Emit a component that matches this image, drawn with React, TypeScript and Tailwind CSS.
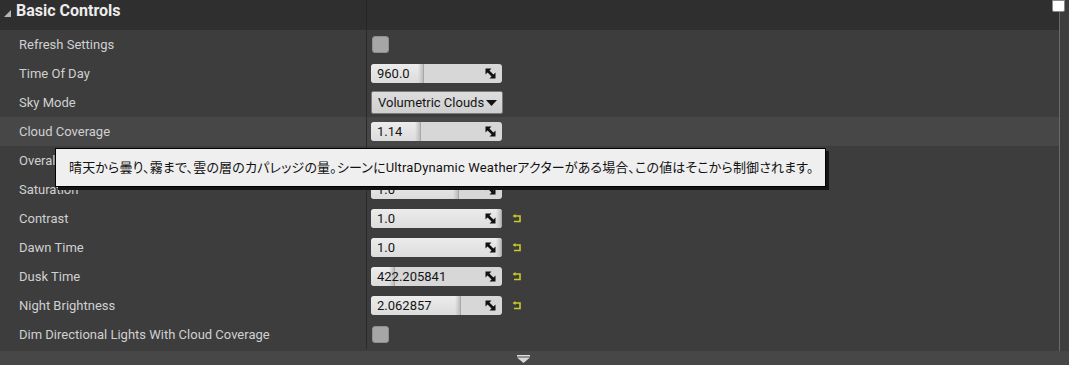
import React from 'react'

type Row =
  | { label: string; kind: 'check' }
  | { label: string; kind: 'spin'; value: string; fill: number; reset?: boolean }
  | { label: string; kind: 'combo'; value: string }

const rows: Row[] = [
  { label: 'Refresh Settings', kind: 'check' },
  { label: 'Time Of Day', kind: 'spin', value: '960.0', fill: 53 },
  { label: 'Sky Mode', kind: 'combo', value: 'Volumetric Clouds' },
  { label: 'Cloud Coverage', kind: 'spin', value: '1.14', fill: 50 },
  { label: 'Overall Intensity', kind: 'spin', value: '1.0', fill: 88, reset: true },
  { label: 'Saturation', kind: 'spin', value: '1.0', fill: 88 },
  { label: 'Contrast', kind: 'spin', value: '1.0', fill: 131, reset: true },
  { label: 'Dawn Time', kind: 'spin', value: '1.0', fill: 131, reset: true },
  { label: 'Dusk Time', kind: 'spin', value: '422.205841', fill: 24, reset: true },
  { label: 'Night Brightness', kind: 'spin', value: '2.062857', fill: 90, reset: true },
  { label: 'Dim Directional Lights With Cloud Coverage', kind: 'check' },
]

function SpinArrows() {
  return (
    <svg width="11" height="11" viewBox="0 0 11 11" className="shrink-0">
      <path d="M0.5 0.5 H6.5 L0.5 6.5 Z" fill="#111" />
      <path d="M10.5 10.5 H4.5 L10.5 4.5 Z" fill="#111" />
      <path d="M2 2 L9 9" stroke="#111" strokeWidth="2.6" />
    </svg>
  )
}

function ResetArrow() {
  return (
    <svg width="10" height="9" viewBox="0 0 10 9" className="shrink-0">
      <path d="M3 2 H8 V7.5 H2" stroke="#c9cc2a" strokeWidth="1.6" fill="none" />
      <path d="M0.5 2 L3.5 0 V4 Z" fill="#c9cc2a" />
    </svg>
  )
}

function Checkbox() {
  return <div className="w-[17px] h-[17px] rounded-[3px] bg-[#a6a6a6] border border-[#8f8f8f]" />
}

function Spin({ value, fill }: { value: string; fill: number }) {
  return (
    <div className="relative w-[131px] h-[19px] rounded-[3px] bg-[#d7d7d7] overflow-hidden">
      <div
        className="absolute left-0 top-0 bottom-0 bg-gradient-to-b from-[#ececec] to-[#dcdcdc] border-r border-[#a8a8a8] rounded-l-[3px]"
        style={{ width: fill }}
      >
        <div className="absolute right-0 top-0 bottom-0 w-[5px] bg-gradient-to-r from-transparent to-[#bdbdbd]" />
      </div>
      <div className="relative flex items-center h-full pl-[6px] pr-[6px]">
        <span className="flex-1 text-[13px] text-[#141414] leading-none">{value}</span>
        <SpinArrows />
      </div>
    </div>
  )
}

function Combo({ value }: { value: string }) {
  return (
    <div className="w-[132px] h-[23px] rounded-[2px] border border-[#7a7a7a] bg-gradient-to-b from-[#dedede] to-[#cfcfcf] flex items-center pl-[6px] pr-[2px]">
      <span className="text-[13px] text-[#141414] leading-none whitespace-nowrap">{value}</span>
      <svg width="11" height="6" viewBox="0 0 11 6" className="ml-[2px] shrink-0">
        <path d="M0 0 H11 L5.5 6 Z" fill="#141414" />
      </svg>
    </div>
  )
}

export default function App() {
  return (
    <div
      className="relative w-[1069px] h-[365px] overflow-hidden bg-[#3d3d3d]"
      style={{ fontFamily: 'Roboto, "Noto Sans CJK JP", sans-serif' }}
    >
      <div className="flex">
        <div className="w-[1059px] flex flex-col">
          {/* Header */}
          <div className="flex h-[30px] bg-[#2f2f2f]">
            <div className="w-[367px] border-r border-[#262626] flex items-start pt-[1px] pl-[4px] gap-[5px]">
              <svg width="7" height="7" viewBox="0 0 7 7" className="mt-[9px]">
                <path d="M7 0 V7 H0 Z" fill="#b5b5b5" />
              </svg>
              <span className="text-[16px] font-bold text-[#ececec] leading-[20px]">Basic Controls</span>
            </div>
          </div>

          {/* Rows */}
          {rows.map((row, i) => (
            <div
              key={row.label}
              className={`flex h-[29px] ${i === 3 ? 'bg-[#474747]' : 'bg-[#3d3d3d]'}`}
            >
              <div className="w-[367px] border-r border-[#2a2a2a] flex items-center pl-[19px]">
                <span className="text-[13px] text-[#d0d0d0]">{row.label}</span>
              </div>
              <div className="flex items-center pl-[4px] gap-[10px]">
                {row.kind === 'check' && <div className="pl-[1px]"><Checkbox /></div>}
                {row.kind === 'spin' && <Spin value={row.value} fill={row.fill} />}
                {row.kind === 'combo' && <Combo value={row.value} />}
                {row.kind === 'spin' && row.reset && <ResetArrow />}
              </div>
            </div>
          ))}
          <div className="h-[2px] bg-[#3d3d3d]" />
        </div>
        <div className="flex-1 border-l border-[#6a6a6a] h-[351px]" />
      </div>

      {/* Footer */}
      <div className="h-[14px] bg-[#474747] flex justify-center pr-[22px] pt-[4px]">
        <svg width="13" height="8" viewBox="0 0 13 8">
          <rect x="0" y="0" width="13" height="1.5" fill="#e0e0e0" />
          <path d="M0 2.5 H13 L6.5 8 Z" fill="#d8d8d8" />
        </svg>
      </div>

      {/* Scrollbar thumb */}
      <div className="absolute left-[1052px] top-0 w-[13px] h-[12px] bg-white border border-[#8a8a8a] rounded-b-[2px]" />

      {/* Tooltip */}
      <div className="absolute left-[55px] top-[148px] w-[771px] h-[39px] bg-[#efefef] border border-black shadow-[3px_3px_0_0_#141414] flex items-center pl-[13px]">
        <span className="text-[13px] tracking-[0.15px] text-[#121212] whitespace-nowrap [font-feature-settings:'palt']">
          晴天から曇り、霧まで、雲の層のカパレッジの量。シーンにUltraDynamic Weatherアクターがある場合、この値はそこから制御されます。
        </span>
      </div>
    </div>
  )
}
